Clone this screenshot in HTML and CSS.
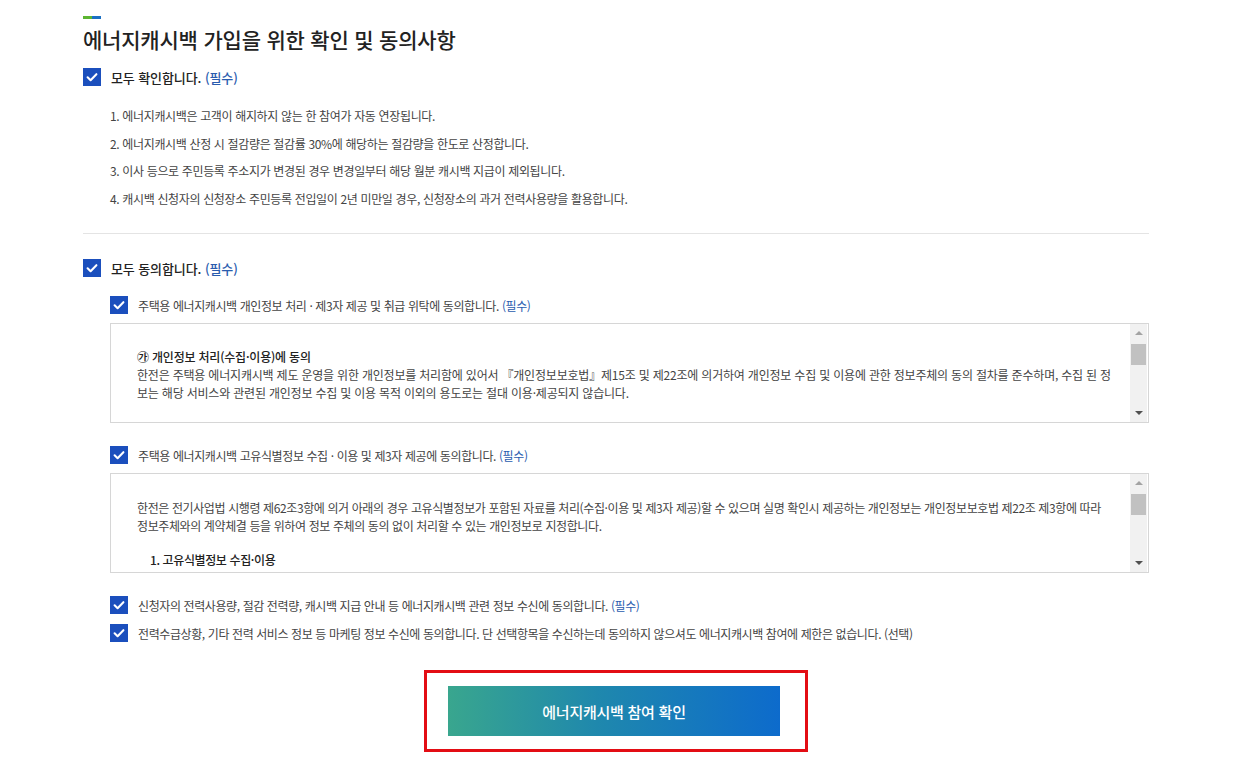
FILE: index.html
```html
<!DOCTYPE html>
<html lang="ko">
<head>
<meta charset="utf-8">
<title>에너지캐시백 가입을 위한 확인 및 동의사항</title>
<link rel="stylesheet" href="styles.css">
</head>
<body>
<main class="page">
  <div class="title-bar"><span class="g"></span><span class="b"></span></div>
  <h2 class="title">에너지캐시백 가입을 위한 확인 및 동의사항</h2>

  <section class="block">
    <label class="check main">
      <svg class="cb" viewBox="0 0 18 18" width="18" height="18"><rect width="18" height="18" fill="#1b4fbd"/><polyline points="4.6,9.3 7.6,12.2 13.4,6.2" fill="none" stroke="#fff" stroke-width="2.1" stroke-linecap="round" stroke-linejoin="round"/></svg>
      <span>모두 확인합니다. <em>(필수)</em></span>
    </label>
    <ol class="notes">
      <li>1. 에너지캐시백은 고객이 해지하지 않는 한 참여가 자동 연장됩니다.</li>
      <li>2. 에너지캐시백 산정 시 절감량은 절감률 30%에 해당하는 절감량을 한도로 산정합니다.</li>
      <li>3. 이사 등으로 주민등록 주소지가 변경된 경우 변경일부터 해당 월분 캐시백 지급이 제외됩니다.</li>
      <li>4. 캐시백 신청자의 신청장소 주민등록 전입일이 2년 미만일 경우, 신청장소의 과거 전력사용량을 활용합니다.</li>
    </ol>
  </section>

  <hr class="divider">

  <section class="block">
    <label class="check main">
      <svg class="cb" viewBox="0 0 18 18" width="18" height="18"><rect width="18" height="18" fill="#1b4fbd"/><polyline points="4.6,9.3 7.6,12.2 13.4,6.2" fill="none" stroke="#fff" stroke-width="2.1" stroke-linecap="round" stroke-linejoin="round"/></svg>
      <span>모두 동의합니다. <em>(필수)</em></span>
    </label>

    <div class="subs">
      <label class="check sub first">
        <svg class="cb" viewBox="0 0 18 18" width="18" height="18"><rect width="18" height="18" fill="#1b4fbd"/><polyline points="4.6,9.3 7.6,12.2 13.4,6.2" fill="none" stroke="#fff" stroke-width="2.1" stroke-linecap="round" stroke-linejoin="round"/></svg>
        <span>주택용 에너지캐시백 개인정보 처리 · 제3자 제공 및 취급 위탁에 동의합니다. <em>(필수)</em></span>
      </label>
      <div class="terms">
        <div class="terms-body t1">
          <p class="strong">㉮ 개인정보 처리(수집·이용)에 동의</p>
          <p>한전은 주택용 에너지캐시백 제도 운영을 위한 개인정보를 처리함에 있어서 『개인정보보호법』제15조 및 제22조에 의거하여 개인정보 수집 및 이용에 관한 정보주체의 동의 절차를 준수하며, 수집 된 정<br>보는 해당 서비스와 관련된 개인정보 수집 및 이용 목적 이외의 용도로는 절대 이용·제공되지 않습니다.</p>
        </div>
        <div class="scroll">
          <span class="arrow up"></span>
          <span class="thumb"></span>
          <span class="track"></span>
          <span class="arrow down"></span>
        </div>
      </div>

      <label class="check sub">
        <svg class="cb" viewBox="0 0 18 18" width="18" height="18"><rect width="18" height="18" fill="#1b4fbd"/><polyline points="4.6,9.3 7.6,12.2 13.4,6.2" fill="none" stroke="#fff" stroke-width="2.1" stroke-linecap="round" stroke-linejoin="round"/></svg>
        <span>주택용 에너지캐시백 고유식별정보 수집 · 이용 및 제3자 제공에 동의합니다. <em>(필수)</em></span>
      </label>
      <div class="terms">
        <div class="terms-body t2">
          <p>한전은 전기사업법 시행령 제62조3항에 의거 아래의 경우 고유식별정보가 포함된 자료를 처리(수집·이용 및 제3자 제공)할 수 있으며 실명 확인시 제공하는 개인정보는 개인정보보호법 제22조 제3항에 따라<br>정보주체와의 계약체결 등을 위하여 정보 주체의 동의 없이 처리할 수 있는 개인정보로 지정합니다.</p>
          <p class="strong indent">1. 고유식별정보 수집·이용</p>
        </div>
        <div class="scroll">
          <span class="arrow up"></span>
          <span class="thumb"></span>
          <span class="track"></span>
          <span class="arrow down"></span>
        </div>
      </div>

      <label class="check sub gap">
        <svg class="cb" viewBox="0 0 18 18" width="18" height="18"><rect width="18" height="18" fill="#1b4fbd"/><polyline points="4.6,9.3 7.6,12.2 13.4,6.2" fill="none" stroke="#fff" stroke-width="2.1" stroke-linecap="round" stroke-linejoin="round"/></svg>
        <span>신청자의 전력사용량, 절감 전력량, 캐시백 지급 안내 등 에너지캐시백 관련 정보 수신에 동의합니다. <em>(필수)</em></span>
      </label>
      <label class="check sub tight">
        <svg class="cb" viewBox="0 0 18 18" width="18" height="18"><rect width="18" height="18" fill="#1b4fbd"/><polyline points="4.6,9.3 7.6,12.2 13.4,6.2" fill="none" stroke="#fff" stroke-width="2.1" stroke-linecap="round" stroke-linejoin="round"/></svg>
        <span>전력수급상황, 기타 전력 서비스 정보 등 마케팅 정보 수신에 동의합니다. 단 선택항목을 수신하는데 동의하지 않으셔도 에너지캐시백 참여에 제한은 없습니다. (선택)</span>
      </label>
    </div>
  </section>

  <div class="actions">
    <div class="highlight">
      <button class="submit" type="button">에너지캐시백 참여 확인</button>
    </div>
  </div>
</main>
</body>
</html>
```

FILE: styles.css
```css
* { box-sizing: border-box; }
html, body { margin: 0; padding: 0; background: #fff; }
body {
  font-family: "Noto Sans CJK KR", "Noto Sans", sans-serif;
  color: #333;
}
.page {
  width: 1066px;
  margin-left: 83px;
  padding-top: 16px;
}
.title-bar { display: flex; height: 3px; width: 18px; }
.title-bar .g { flex: 1; background: #5cb531; }
.title-bar .b { flex: 1; background: #1a6fc4; }
.title {
  margin: 5px 0 0;
  font-size: 21px;
  line-height: 30px;
  font-weight: 500;
  color: #222;
  letter-spacing: -0.2px;
}
.check {
  display: flex;
  align-items: center;
  gap: 10px;
  height: 18px;
}
.check .cb { flex: none; display: block; }
.check em { font-style: normal; color: #2a5cae; }
.check.main { font-size: 13px; font-weight: 500; color: #222; letter-spacing: -0.1px; }
.block > .check.main { margin-top: 14px; }
.notes {
  list-style: none;
  margin: 16px 0 0;
  padding: 0 0 0 27px;
  font-size: 12px;
  color: #444;
  letter-spacing: -0.35px;
}
.notes li { line-height: 27.6px; }
.divider {
  border: 0;
  border-top: 1px solid #e4e4e4;
  margin: 21px 0 0;
}
.divider + .block > .check.main { margin-top: 25px; }
.subs { padding-left: 27px; }
.check.sub {
  font-size: 12px;
  color: #444;
  letter-spacing: -0.4px;
}
.check.sub.first { margin-top: 19px; }
.check.sub.gap { margin-top: 21px; }
.check.sub.tight { margin-top: 10px; }
.terms {
  margin-top: 9px;
  margin-bottom: 23px;
  height: 100px;
  border: 1px solid #d6d6d6;
  display: flex;
  overflow: hidden;
}
.terms-body {
  flex: 1;
  min-width: 0;
  padding: 24px 0 0 26px;
  font-size: 12px;
  line-height: 18px;
  color: #444;
  letter-spacing: -0.2px;
  overflow: hidden;
  white-space: nowrap;
}
.terms-body.t2 { padding-top: 25px; letter-spacing: -0.39px; }
.terms-body p { margin: 0; }
.terms-body .strong { font-weight: 500; color: #222; }
.terms-body .indent { margin-top: 16px; padding-left: 13px; }
.scroll {
  flex: none;
  width: 17px;
  margin-right: 1px;
  background: #f1f1f1;
  display: flex;
  flex-direction: column;
  align-items: center;
}
.scroll .arrow {
  flex: none;
  width: 0; height: 0;
  border-left: 4px solid transparent;
  border-right: 4px solid transparent;
}
.scroll .arrow.up { margin-top: 7px; border-bottom: 4px solid #a3a3a3; }
.scroll .arrow.down { margin-bottom: 7px; border-top: 4px solid #505050; }
.scroll .thumb {
  flex: none;
  width: 15px;
  height: 21px;
  margin-top: 9px;
  background: #c1c1c1;
}
.scroll .track { flex: 1; }
.actions {
  display: flex;
  justify-content: center;
  margin-top: 28px;
}
.highlight {
  border: 3px solid #e30d14;
  padding: 13px 25px 13px 21px;
}
.submit {
  display: block;
  width: 332px;
  height: 50px;
  border: 0;
  background: linear-gradient(90deg, #39a68e 0%, #1f88ad 45%, #0d6bcc 100%);
  color: #fff;
  font-family: "Noto Sans CJK KR", "Noto Sans", sans-serif;
  font-size: 15px;
  font-weight: 500;
  letter-spacing: -0.25px;
  cursor: pointer;
}
```
